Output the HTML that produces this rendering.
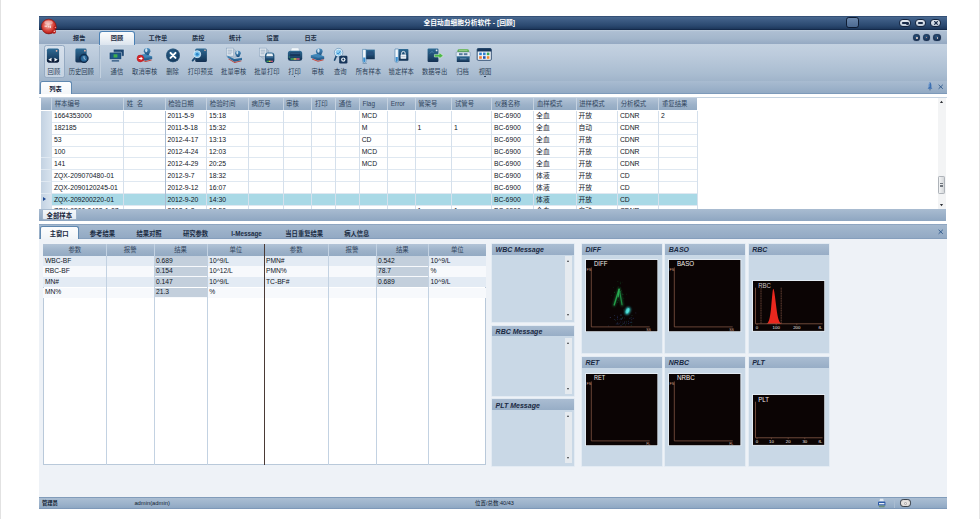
<!DOCTYPE html>
<html lang="zh"><head><meta charset="utf-8"><title>全自动血细胞分析软件</title>
<style>
*{box-sizing:border-box;margin:0;padding:0}
html,body{width:980px;height:519px;overflow:hidden;background:#fff}
body{position:relative;font-family:"Liberation Sans","Noto Sans CJK SC",sans-serif;font-size:6.5px;color:#1c2a3a;line-height:1}
.a{position:absolute}
.t{position:absolute;white-space:nowrap}
.c{position:absolute;white-space:nowrap;transform:translateX(-50%);text-align:center}
#title{left:39px;top:16px;width:908px;height:14px;background:linear-gradient(#243d62 0%,#48688f 8%,#3c5b83 30%,#2a486f 70%,#1e395d 90%,#0f2240 100%)}
#menu{left:39px;top:30px;width:908px;height:14px;background:linear-gradient(#c3d1e0 0,#adbed2 12%,#a4b7cc 60%,#94a9c2 100%)}
#ribbon{left:39px;top:43.6px;width:908px;height:37.4px;background:linear-gradient(#c4d2e1 0,#bccbdc 30%,#aabdd1 80%,#a0b4ca 100%)}
#strip1{left:39px;top:81px;width:908px;height:13.2px;background:linear-gradient(#a9bcd1 0,#93aac4 90%,#6f90b4 100%)}
.mt{top:35.1px;font-weight:bold;font-size:6.2px;color:#1d2f45}
.rl{top:68.9px;font-size:6.3px;color:#2b3e57}
</style></head>
<body>
<div class="a" style="left:0;top:0;width:1px;height:519px;background:#e2e2e2"></div><div class="a" style="left:979px;top:0;width:1px;height:519px;background:#e6e6e6"></div>
<div class="a" id="title"></div>
<div class="c" style="left:469.2px;top:20.4px;color:#fff;font-weight:bold;font-size:6.75px">全自动血细胞分析软件 - [回顾]</div>
<div class="a" id="menu"></div>
<div class="a" id="ribbon"></div>
<div class="a" id="strip1"></div>
<svg class="a" style="left:40px;top:17px" width="20" height="20" viewBox="0 0 20 20"><defs><radialGradient id="lg" cx="45%" cy="42%" r="60%"><stop offset="0" stop-color="#f6c9c2"/><stop offset="0.5" stop-color="#de5a50"/><stop offset="0.85" stop-color="#c4241d"/><stop offset="1" stop-color="#8a1410"/></radialGradient><filter id="lb" x="-30%" y="-30%" width="160%" height="160%"><feGaussianBlur stdDeviation="0.5"/></filter></defs><circle cx="8.8" cy="9.5" r="7.4" fill="url(#lg)" stroke="#7e120f" stroke-width="0.6"/><ellipse cx="8.6" cy="5.6" rx="4.2" ry="2.2" fill="#fff" opacity=".4" filter="url(#lb)"/><path d="M4.6 9.2H7M8 9.8H9.4M10.4 8.6V11" stroke="#fff" stroke-width="1" opacity=".8" filter="url(#lb)"/><circle cx="15" cy="10.6" r="1.5" fill="#b71d18"/><circle cx="15.3" cy="10.3" r="0.6" fill="#f3b9ad"/><circle cx="14" cy="14.8" r="2" fill="#b71d18"/><circle cx="14.3" cy="14.2" r="0.8" fill="#f6d2c9"/></svg>
<div class="a" style="left:99.3px;top:31px;width:36px;height:14.4px;background:linear-gradient(#fbfcfd,#eef2f6 50%,#dbe4ee);border:1px solid #4a80b4;border-bottom:none;border-radius:3.2px 3.2px 0 0"></div>
<div class="c mt" style="left:79.2px">报告</div>
<div class="c mt" style="left:116.9px">回顾</div>
<div class="c mt" style="left:157.9px">工作单</div>
<div class="c mt" style="left:198.3px">质控</div>
<div class="c mt" style="left:235.2px">统计</div>
<div class="c mt" style="left:272.7px">设置</div>
<div class="c mt" style="left:310.6px">日志</div>
<div class="a" style="left:43.6px;top:45.4px;width:21px;height:32.8px;border-radius:2.5px;background:linear-gradient(#d7e1ec,#c5d2e1);border:0.6px solid #95aac2"></div>
<div class="a" style="left:99px;top:46px;width:0.7px;height:32px;background:#a3b6cb"></div>
<div class="a" style="left:99.7px;top:46px;width:0.7px;height:32px;background:#c3d1df"></div>
<div class="c rl" style="left:53.9px">回顾</div>
<div class="c rl" style="left:81.3px">历史回顾</div>
<div class="c rl" style="left:116.9px">通信</div>
<div class="c rl" style="left:144.7px">取消审核</div>
<div class="c rl" style="left:172.6px">删除</div>
<div class="c rl" style="left:200.4px">打印预览</div>
<div class="c rl" style="left:233.7px">批量审核</div>
<div class="c rl" style="left:266.9px">批量打印</div>
<div class="c rl" style="left:294.6px">打印</div>
<div class="c rl" style="left:317.7px">审核</div>
<div class="c rl" style="left:340.3px">查询</div>
<div class="c rl" style="left:368.4px">所有样本</div>
<div class="c rl" style="left:401.2px">锁定样本</div>
<div class="c rl" style="left:434.6px">数据导出</div>
<div class="c rl" style="left:462.6px">归档</div>
<div class="c rl" style="left:485px">视图</div>
<div class="a" style="left:845.8px;top:17.4px;width:12.8px;height:11px;border-radius:2.8px;border:1.6px solid #0e1c33;background:linear-gradient(#6c88ad,#4b6990)"></div>
<div class="a" style="left:899.2px;top:19.2px;width:11.6px;height:7.6px;border-radius:3.8px;border:1.1px solid #13223b;background:linear-gradient(#e4e9f0,#bfcbd9)"></div>
<div class="a" style="left:914.6px;top:19.2px;width:11.6px;height:7.6px;border-radius:3.8px;border:1.1px solid #13223b;background:linear-gradient(#e4e9f0,#bfcbd9)"></div>
<div class="a" style="left:929.9px;top:19.2px;width:11.6px;height:7.6px;border-radius:3.8px;border:1.1px solid #13223b;background:linear-gradient(#e4e9f0,#bfcbd9)"></div>
<div class="a" style="left:901.8px;top:22.2px;width:6px;height:1.7px;background:#1a2c49;border-radius:0.8px"></div><div class="a" style="left:905.6px;top:21.5px;width:3.1px;height:3.1px;background:#1a2c49;border-radius:1.3px"></div>
<div class="a" style="left:917.8px;top:22.1px;width:5.2px;height:1.9px;background:#1a2c49;border-radius:0.9px"></div>
<svg class="a" style="left:931.7px;top:19.2px" width="8" height="8" viewBox="0 0 8 8"><path d="M2.6 2.5L5.4 5.3M5.4 2.5L2.6 5.3" stroke="#1a2c49" stroke-width="1.1" stroke-linecap="round"/></svg>
<div class="a" style="left:912.6px;top:34px;width:7.2px;height:7.2px;border-radius:50%;background:radial-gradient(circle at 45% 40%,#2f5880,#14294a 70%);box-shadow:0 0 0.8px #14294a"></div>
<div class="a" style="left:922.9px;top:34px;width:7.2px;height:7.2px;border-radius:50%;background:radial-gradient(circle at 45% 40%,#2f5880,#14294a 70%);box-shadow:0 0 0.8px #14294a"></div>
<div class="a" style="left:933.4px;top:34px;width:7.2px;height:7.2px;border-radius:50%;background:radial-gradient(circle at 45% 40%,#2f5880,#14294a 70%);box-shadow:0 0 0.8px #14294a"></div>
<div class="a" style="left:915.9px;top:37.4px;width:1.9px;height:2.1px;border-radius:50%;background:#f0d9cf"></div>
<div class="a" style="left:926.1px;top:36.6px;width:1.1px;height:1.9px;border-radius:40%;background:#c98f86"></div>
<div class="a" style="left:936.5px;top:36.6px;width:1.1px;height:2.6px;border-radius:40%;background:#e3cfc8"></div>
<div class="a" style="left:39.6px;top:80.9px;width:32.2px;height:13.6px;background:linear-gradient(#fdfdfe,#f3f6f9);border:1px solid #5f88b0;border-bottom:none;border-radius:2.5px 2.5px 0 0"></div>
<div class="c" style="left:55.4px;top:85.9px;font-weight:bold;font-size:6.2px;color:#15243a">列表</div>
<svg class="a" style="left:926px;top:81px" width="20" height="12" viewBox="0 0 20 12"><path d="M2.6 6.6Q2.4 1.4 4 1.2Q5.6 1.4 5.4 6.6L6.4 7.8H1.6Z" fill="#3b6fb2"/><path d="M3 6Q3 2.4 3.8 2" stroke="#9fc0e6" stroke-width="0.6" fill="none"/><path d="M4 7.8V9.4" stroke="#2b4a78" stroke-width="0.7"/><path d="M12.6 3.8L16.8 7.8M16.8 3.8L12.6 7.8" stroke="#2b5689" stroke-width="0.9"/></svg>
<div class="a" style="left:39px;top:94.4px;width:908px;height:116px;background:#fff"></div>
<div class="a" style="left:39px;top:97.2px;width:908px;height:0.8px;background:#c6d3e1"></div>
<div class="a" style="left:40.5px;top:98px;width:656.5px;height:12.200000000000003px;background:linear-gradient(#b3c4d7,#9db2c9 55%,#93aac3)"></div>
<div class="t" style="left:54.7px;top:101.2px;color:#33475f;font-size:6.4px">样本编号</div>
<div class="a" style="left:51.2px;top:98px;width:0.7px;height:12.200000000000003px;background:#c4d1df"></div>
<div class="t" style="left:126.8px;top:101.2px;color:#33475f;font-size:6.4px">姓&nbsp;&nbsp;名</div>
<div class="a" style="left:123.3px;top:98px;width:0.7px;height:12.200000000000003px;background:#c4d1df"></div>
<div class="t" style="left:168.2px;top:101.2px;color:#33475f;font-size:6.4px">检验日期</div>
<div class="a" style="left:164.7px;top:98px;width:0.7px;height:12.200000000000003px;background:#c4d1df"></div>
<div class="t" style="left:209.79999999999998px;top:101.2px;color:#33475f;font-size:6.4px">检验时间</div>
<div class="a" style="left:206.29999999999998px;top:98px;width:0.7px;height:12.200000000000003px;background:#c4d1df"></div>
<div class="t" style="left:251.6px;top:101.2px;color:#33475f;font-size:6.4px">病历号</div>
<div class="a" style="left:248.1px;top:98px;width:0.7px;height:12.200000000000003px;background:#c4d1df"></div>
<div class="t" style="left:286.0px;top:101.2px;color:#33475f;font-size:6.4px">审核</div>
<div class="a" style="left:282.5px;top:98px;width:0.7px;height:12.200000000000003px;background:#c4d1df"></div>
<div class="t" style="left:314.9px;top:101.2px;color:#33475f;font-size:6.4px">打印</div>
<div class="a" style="left:311.4px;top:98px;width:0.7px;height:12.200000000000003px;background:#c4d1df"></div>
<div class="t" style="left:338.8px;top:101.2px;color:#33475f;font-size:6.4px">通信</div>
<div class="a" style="left:335.3px;top:98px;width:0.7px;height:12.200000000000003px;background:#c4d1df"></div>
<div class="t" style="left:362.5px;top:101.2px;color:#33475f;font-size:6.4px">Flag</div>
<div class="a" style="left:359.0px;top:98px;width:0.7px;height:12.200000000000003px;background:#c4d1df"></div>
<div class="t" style="left:390.8px;top:101.2px;color:#33475f;font-size:6.4px">Error</div>
<div class="a" style="left:387.3px;top:98px;width:0.7px;height:12.200000000000003px;background:#c4d1df"></div>
<div class="t" style="left:418.2px;top:101.2px;color:#33475f;font-size:6.4px">管架号</div>
<div class="a" style="left:414.7px;top:98px;width:0.7px;height:12.200000000000003px;background:#c4d1df"></div>
<div class="t" style="left:454.9px;top:101.2px;color:#33475f;font-size:6.4px">试管号</div>
<div class="a" style="left:451.4px;top:98px;width:0.7px;height:12.200000000000003px;background:#c4d1df"></div>
<div class="t" style="left:494.7px;top:101.2px;color:#33475f;font-size:6.4px">仪器名称</div>
<div class="a" style="left:491.2px;top:98px;width:0.7px;height:12.200000000000003px;background:#c4d1df"></div>
<div class="t" style="left:536.9000000000001px;top:101.2px;color:#33475f;font-size:6.4px">血样模式</div>
<div class="a" style="left:533.4000000000001px;top:98px;width:0.7px;height:12.200000000000003px;background:#c4d1df"></div>
<div class="t" style="left:579.2px;top:101.2px;color:#33475f;font-size:6.4px">进样模式</div>
<div class="a" style="left:575.7px;top:98px;width:0.7px;height:12.200000000000003px;background:#c4d1df"></div>
<div class="t" style="left:620.7px;top:101.2px;color:#33475f;font-size:6.4px">分析模式</div>
<div class="a" style="left:617.2px;top:98px;width:0.7px;height:12.200000000000003px;background:#c4d1df"></div>
<div class="t" style="left:661.9000000000001px;top:101.2px;color:#33475f;font-size:6.4px">重复结果</div>
<div class="a" style="left:658.4000000000001px;top:98px;width:0.7px;height:12.200000000000003px;background:#c4d1df"></div>
<div class="a" style="left:39px;top:110.6px;width:908px;height:98.6px;overflow:hidden">
<div class="a" style="left:1.5px;top:0.0px;width:11.0px;height:11.26px;background:linear-gradient(90deg,#c3d2e2,#d9e4ef)"></div>
<div class="a" style="left:1.5px;top:11.26px;width:656.5px;height:0.7px;background:#dfe8f1"></div>
<div class="t" style="left:14.9px;top:2.9px;font-size:6.8px;color:#10161f">1664353000</div>
<div class="t" style="left:128.4px;top:2.9px;font-size:6.8px;color:#10161f">2011-5-9</div>
<div class="t" style="left:170.0px;top:2.9px;font-size:6.8px;color:#10161f">15:18</div>
<div class="t" style="left:322.7px;top:2.9px;font-size:6.8px;color:#10161f">MCD</div>
<div class="t" style="left:454.9px;top:2.9px;font-size:6.8px;color:#10161f">BC-6900</div>
<div class="t" style="left:497.1px;top:2.9px;font-size:6.8px;color:#10161f">全血</div>
<div class="t" style="left:539.4px;top:2.9px;font-size:6.8px;color:#10161f">开放</div>
<div class="t" style="left:580.9px;top:2.9px;font-size:6.8px;color:#10161f">CDNR</div>
<div class="t" style="left:622.1px;top:2.9px;font-size:6.8px;color:#10161f">2</div>
<div class="a" style="left:1.5px;top:11.86px;width:11.0px;height:11.26px;background:linear-gradient(90deg,#c3d2e2,#d9e4ef)"></div>
<div class="a" style="left:1.5px;top:23.119999999999997px;width:656.5px;height:0.7px;background:#dfe8f1"></div>
<div class="t" style="left:14.9px;top:14.76px;font-size:6.8px;color:#10161f">182185</div>
<div class="t" style="left:128.4px;top:14.76px;font-size:6.8px;color:#10161f">2011-5-18</div>
<div class="t" style="left:170.0px;top:14.76px;font-size:6.8px;color:#10161f">15:32</div>
<div class="t" style="left:322.7px;top:14.76px;font-size:6.8px;color:#10161f">M</div>
<div class="t" style="left:378.4px;top:14.76px;font-size:6.8px;color:#10161f">1</div>
<div class="t" style="left:415.09999999999997px;top:14.76px;font-size:6.8px;color:#10161f">1</div>
<div class="t" style="left:454.9px;top:14.76px;font-size:6.8px;color:#10161f">BC-6900</div>
<div class="t" style="left:497.1px;top:14.76px;font-size:6.8px;color:#10161f">全血</div>
<div class="t" style="left:539.4px;top:14.76px;font-size:6.8px;color:#10161f">自动</div>
<div class="t" style="left:580.9px;top:14.76px;font-size:6.8px;color:#10161f">CDNR</div>
<div class="a" style="left:1.5px;top:23.72px;width:11.0px;height:11.26px;background:linear-gradient(90deg,#c3d2e2,#d9e4ef)"></div>
<div class="a" style="left:1.5px;top:34.98px;width:656.5px;height:0.7px;background:#dfe8f1"></div>
<div class="t" style="left:14.9px;top:26.619999999999997px;font-size:6.8px;color:#10161f">53</div>
<div class="t" style="left:128.4px;top:26.619999999999997px;font-size:6.8px;color:#10161f">2012-4-17</div>
<div class="t" style="left:170.0px;top:26.619999999999997px;font-size:6.8px;color:#10161f">13:13</div>
<div class="t" style="left:322.7px;top:26.619999999999997px;font-size:6.8px;color:#10161f">CD</div>
<div class="t" style="left:454.9px;top:26.619999999999997px;font-size:6.8px;color:#10161f">BC-6900</div>
<div class="t" style="left:497.1px;top:26.619999999999997px;font-size:6.8px;color:#10161f">全血</div>
<div class="t" style="left:539.4px;top:26.619999999999997px;font-size:6.8px;color:#10161f">开放</div>
<div class="t" style="left:580.9px;top:26.619999999999997px;font-size:6.8px;color:#10161f">CDNR</div>
<div class="a" style="left:1.5px;top:35.58px;width:11.0px;height:11.26px;background:linear-gradient(90deg,#c3d2e2,#d9e4ef)"></div>
<div class="a" style="left:1.5px;top:46.839999999999996px;width:656.5px;height:0.7px;background:#dfe8f1"></div>
<div class="t" style="left:14.9px;top:38.48px;font-size:6.8px;color:#10161f">100</div>
<div class="t" style="left:128.4px;top:38.48px;font-size:6.8px;color:#10161f">2012-4-24</div>
<div class="t" style="left:170.0px;top:38.48px;font-size:6.8px;color:#10161f">12:03</div>
<div class="t" style="left:322.7px;top:38.48px;font-size:6.8px;color:#10161f">MCD</div>
<div class="t" style="left:454.9px;top:38.48px;font-size:6.8px;color:#10161f">BC-6900</div>
<div class="t" style="left:497.1px;top:38.48px;font-size:6.8px;color:#10161f">全血</div>
<div class="t" style="left:539.4px;top:38.48px;font-size:6.8px;color:#10161f">开放</div>
<div class="t" style="left:580.9px;top:38.48px;font-size:6.8px;color:#10161f">CDNR</div>
<div class="a" style="left:1.5px;top:47.44px;width:11.0px;height:11.26px;background:linear-gradient(90deg,#c3d2e2,#d9e4ef)"></div>
<div class="a" style="left:1.5px;top:58.699999999999996px;width:656.5px;height:0.7px;background:#dfe8f1"></div>
<div class="t" style="left:14.9px;top:50.339999999999996px;font-size:6.8px;color:#10161f">141</div>
<div class="t" style="left:128.4px;top:50.339999999999996px;font-size:6.8px;color:#10161f">2012-4-29</div>
<div class="t" style="left:170.0px;top:50.339999999999996px;font-size:6.8px;color:#10161f">20:25</div>
<div class="t" style="left:322.7px;top:50.339999999999996px;font-size:6.8px;color:#10161f">MCD</div>
<div class="t" style="left:454.9px;top:50.339999999999996px;font-size:6.8px;color:#10161f">BC-6900</div>
<div class="t" style="left:497.1px;top:50.339999999999996px;font-size:6.8px;color:#10161f">全血</div>
<div class="t" style="left:539.4px;top:50.339999999999996px;font-size:6.8px;color:#10161f">开放</div>
<div class="t" style="left:580.9px;top:50.339999999999996px;font-size:6.8px;color:#10161f">CDNR</div>
<div class="a" style="left:1.5px;top:59.3px;width:11.0px;height:11.26px;background:linear-gradient(90deg,#c3d2e2,#d9e4ef)"></div>
<div class="a" style="left:1.5px;top:70.56px;width:656.5px;height:0.7px;background:#dfe8f1"></div>
<div class="t" style="left:14.9px;top:62.199999999999996px;font-size:6.8px;color:#10161f">ZQX-209070480-01</div>
<div class="t" style="left:128.4px;top:62.199999999999996px;font-size:6.8px;color:#10161f">2012-9-7</div>
<div class="t" style="left:170.0px;top:62.199999999999996px;font-size:6.8px;color:#10161f">18:32</div>
<div class="t" style="left:454.9px;top:62.199999999999996px;font-size:6.8px;color:#10161f">BC-6900</div>
<div class="t" style="left:497.1px;top:62.199999999999996px;font-size:6.8px;color:#10161f">体液</div>
<div class="t" style="left:539.4px;top:62.199999999999996px;font-size:6.8px;color:#10161f">开放</div>
<div class="t" style="left:580.9px;top:62.199999999999996px;font-size:6.8px;color:#10161f">CD</div>
<div class="a" style="left:1.5px;top:71.16px;width:11.0px;height:11.26px;background:linear-gradient(90deg,#c3d2e2,#d9e4ef)"></div>
<div class="a" style="left:1.5px;top:82.42px;width:656.5px;height:0.7px;background:#dfe8f1"></div>
<div class="t" style="left:14.9px;top:74.06px;font-size:6.8px;color:#10161f">ZQX-2090120245-01</div>
<div class="t" style="left:128.4px;top:74.06px;font-size:6.8px;color:#10161f">2012-9-12</div>
<div class="t" style="left:170.0px;top:74.06px;font-size:6.8px;color:#10161f">16:07</div>
<div class="t" style="left:454.9px;top:74.06px;font-size:6.8px;color:#10161f">BC-6900</div>
<div class="t" style="left:497.1px;top:74.06px;font-size:6.8px;color:#10161f">体液</div>
<div class="t" style="left:539.4px;top:74.06px;font-size:6.8px;color:#10161f">开放</div>
<div class="t" style="left:580.9px;top:74.06px;font-size:6.8px;color:#10161f">CD</div>
<div class="a" style="left:12.5px;top:83.02px;width:645.5px;height:11.86px;background:#a9d9e6"></div>
<div class="a" style="left:1.5px;top:83.02px;width:11.0px;height:11.26px;background:linear-gradient(90deg,#c3d2e2,#d9e4ef)"></div>
<div class="a" style="left:1.5px;top:94.28px;width:656.5px;height:0.7px;background:#dfe8f1"></div>
<div class="t" style="left:14.9px;top:85.92px;font-size:6.8px;color:#10161f">ZQX-209200220-01</div>
<div class="t" style="left:128.4px;top:85.92px;font-size:6.8px;color:#10161f">2012-9-20</div>
<div class="t" style="left:170.0px;top:85.92px;font-size:6.8px;color:#10161f">14:30</div>
<div class="t" style="left:454.9px;top:85.92px;font-size:6.8px;color:#10161f">BC-6900</div>
<div class="t" style="left:497.1px;top:85.92px;font-size:6.8px;color:#10161f">体液</div>
<div class="t" style="left:539.4px;top:85.92px;font-size:6.8px;color:#10161f">开放</div>
<div class="t" style="left:580.9px;top:85.92px;font-size:6.8px;color:#10161f">CD</div>
<div class="a" style="left:1.5px;top:94.88px;width:11.0px;height:11.26px;background:linear-gradient(90deg,#c3d2e2,#d9e4ef)"></div>
<div class="a" style="left:1.5px;top:106.14px;width:656.5px;height:0.7px;background:#dfe8f1"></div>
<div class="t" style="left:14.9px;top:96.97999999999999px;font-size:6.8px;color:#10161f">ZQX-6900-0408-1-07</div>
<div class="t" style="left:128.4px;top:96.97999999999999px;font-size:6.8px;color:#10161f">2012-1-2</div>
<div class="t" style="left:170.0px;top:96.97999999999999px;font-size:6.8px;color:#10161f">13:50</div>
<div class="t" style="left:378.4px;top:96.97999999999999px;font-size:6.8px;color:#10161f">1</div>
<div class="t" style="left:415.09999999999997px;top:96.97999999999999px;font-size:6.8px;color:#10161f">1</div>
<div class="t" style="left:454.9px;top:96.97999999999999px;font-size:6.8px;color:#10161f">BC-6900</div>
<div class="t" style="left:497.1px;top:96.97999999999999px;font-size:6.8px;color:#10161f">全血</div>
<div class="t" style="left:539.4px;top:96.97999999999999px;font-size:6.8px;color:#10161f">自动</div>
<div class="t" style="left:580.9px;top:96.97999999999999px;font-size:6.8px;color:#10161f">CDNR</div>
<div class="a" style="left:4.2px;top:86.32px;width:0;height:0;border-left:3px solid #1f4a94;border-top:2.3px solid transparent;border-bottom:2.3px solid transparent"></div>
<div class="a" style="left:12.2px;top:0;width:0.7px;height:100px;background:#d5e0ec"></div>
<div class="a" style="left:84.3px;top:0;width:0.7px;height:100px;background:#d5e0ec"></div>
<div class="a" style="left:125.7px;top:0;width:0.9px;height:100px;background:#aabcd2"></div>
<div class="a" style="left:167.29999999999998px;top:0;width:0.7px;height:100px;background:#d5e0ec"></div>
<div class="a" style="left:209.1px;top:0;width:0.7px;height:100px;background:#d5e0ec"></div>
<div class="a" style="left:243.5px;top:0;width:0.7px;height:100px;background:#d5e0ec"></div>
<div class="a" style="left:272.4px;top:0;width:0.7px;height:100px;background:#d5e0ec"></div>
<div class="a" style="left:296.3px;top:0;width:0.7px;height:100px;background:#d5e0ec"></div>
<div class="a" style="left:320.0px;top:0;width:0.7px;height:100px;background:#d5e0ec"></div>
<div class="a" style="left:348.3px;top:0;width:0.7px;height:100px;background:#d5e0ec"></div>
<div class="a" style="left:375.7px;top:0;width:0.7px;height:100px;background:#d5e0ec"></div>
<div class="a" style="left:412.4px;top:0;width:0.7px;height:100px;background:#d5e0ec"></div>
<div class="a" style="left:452.2px;top:0;width:0.7px;height:100px;background:#d5e0ec"></div>
<div class="a" style="left:494.40000000000003px;top:0;width:0.7px;height:100px;background:#d5e0ec"></div>
<div class="a" style="left:536.7px;top:0;width:0.7px;height:100px;background:#d5e0ec"></div>
<div class="a" style="left:578.2px;top:0;width:0.7px;height:100px;background:#d5e0ec"></div>
<div class="a" style="left:619.4000000000001px;top:0;width:0.7px;height:100px;background:#d5e0ec"></div>
<div class="a" style="left:657.7px;top:0;width:0.7px;height:100px;background:#d5e0ec"></div>
</div>
<div class="a" style="left:938px;top:98px;width:7.6px;height:111px;background:#f3f4f5"></div>
<div class="a" style="left:937.6px;top:176px;width:7.6px;height:17.6px;background:linear-gradient(90deg,#f4f5f6,#d4d7da);border:0.6px solid #aeb3b9;border-radius:1.2px"></div>
<div class="a" style="left:939.7px;top:183.4px;width:3.4px;height:0.7px;background:#70767e"></div><div class="a" style="left:939.7px;top:184.8px;width:3.4px;height:0.7px;background:#70767e"></div><div class="a" style="left:939.7px;top:186.2px;width:3.4px;height:0.7px;background:#70767e"></div>
<svg class="a" style="left:938px;top:99px" width="8" height="6" viewBox="0 0 8 6"><path d="M1.9 3.9L3.5 1.7L5.1 3.9Z" fill="#2e3136"/></svg>
<svg class="a" style="left:938px;top:202px" width="8" height="6" viewBox="0 0 8 6"><path d="M1.9 2L3.5 4.2L5.1 2Z" fill="#2e3136"/></svg>
<div class="a" style="left:39px;top:209.2px;width:907.2px;height:11.4px;background:linear-gradient(#a9bcd1,#8ea6c1)"></div>
<div class="a" style="left:41.6px;top:209.8px;width:35.4px;height:10.2px;background:linear-gradient(#f4f7fa,#e3eaf2);border:0.6px solid #a3b6cc;border-top:none;border-radius:0 0 2px 2px"></div>
<div class="c" style="left:59.3px;top:212.6px;font-weight:bold;font-size:6.4px;color:#15243a">全部样本</div>
<div class="a" style="left:39px;top:220.6px;width:908px;height:3.6px;background:#fff"></div>
<div class="a" style="left:39px;top:224px;width:908px;height:14.9px;background:linear-gradient(#7f99b8 0,#a4b8ce 8%,#93aac4 90%,#7f99b8 100%)"></div>
<div class="a" style="left:39px;top:239px;width:908px;height:258px;background:#eef2f7"></div>
<div class="a" style="left:39.8px;top:226.2px;width:39.2px;height:13.2px;background:linear-gradient(#fdfdfe,#f0f4f8);border:1px solid #5f88b0;border-bottom:none;border-radius:2.5px 2.5px 0 0"></div>
<div class="c" style="left:59.2px;top:231.3px;font-weight:bold;font-size:6.3px;color:#1a2b42">主窗口</div>
<div class="c" style="left:102.4px;top:231.3px;font-weight:bold;font-size:6.3px;color:#1a2b42">参考结果</div>
<div class="c" style="left:149px;top:231.3px;font-weight:bold;font-size:6.3px;color:#1a2b42">结果对照</div>
<div class="c" style="left:195.5px;top:231.3px;font-weight:bold;font-size:6.3px;color:#1a2b42">研究参数</div>
<div class="c" style="left:246.6px;top:231.3px;font-weight:bold;font-size:6.3px;color:#1a2b42">I-Message</div>
<div class="c" style="left:304.2px;top:231.3px;font-weight:bold;font-size:6.3px;color:#1a2b42">当日重复结果</div>
<div class="c" style="left:356.8px;top:231.3px;font-weight:bold;font-size:6.3px;color:#1a2b42">病人信息</div>
<svg class="a" style="left:936px;top:227px" width="10" height="10" viewBox="0 0 10 10"><path d="M2.6 2.8L6.8 6.8M6.8 2.8L2.6 6.8" stroke="#2b5689" stroke-width="0.9"/></svg>
<div class="a" style="left:43.3px;top:243.5px;width:442.7px;height:221.89999999999998px;background:#fff;border:0.6px solid #b9c9da"></div>
<div class="a" style="left:43.3px;top:243.5px;width:442.7px;height:12.199999999999989px;background:linear-gradient(#b3c4d7,#9db2c9 55%,#93aac3)"></div>
<div class="c" style="left:74.85px;top:246.6px;color:#33475f;font-size:6.4px">参数</div>
<div class="c" style="left:130.2px;top:246.6px;color:#33475f;font-size:6.4px">报警</div>
<div class="c" style="left:180.6px;top:246.6px;color:#33475f;font-size:6.4px">结果</div>
<div class="c" style="left:235.79999999999998px;top:246.6px;color:#33475f;font-size:6.4px">单位</div>
<div class="c" style="left:296.2px;top:246.6px;color:#33475f;font-size:6.4px">参数</div>
<div class="c" style="left:352.0px;top:246.6px;color:#33475f;font-size:6.4px">报警</div>
<div class="c" style="left:402.3px;top:246.6px;color:#33475f;font-size:6.4px">结果</div>
<div class="c" style="left:457.3px;top:246.6px;color:#33475f;font-size:6.4px">单位</div>
<div class="a" style="left:43.3px;top:255.7px;width:442.7px;height:10.6px;background:#e3ebf4"></div>
<div class="a" style="left:154.4px;top:256.0px;width:52.59999999999999px;height:9.7px;background:#c3cfdc"></div>
<div class="t" style="left:44.9px;top:257.59999999999997px;font-size:6.7px;color:#10161f">WBC-BF</div>
<div class="t" style="left:156px;top:257.59999999999997px;font-size:6.7px;color:#10161f">0.689</div>
<div class="t" style="left:209.2px;top:257.59999999999997px;font-size:6.7px;color:#10161f">10^9/L</div>
<div class="a" style="left:376.4px;top:256.0px;width:52.00000000000002px;height:9.7px;background:#c3cfdc"></div>
<div class="t" style="left:266.0px;top:257.59999999999997px;font-size:6.7px;color:#10161f">PMN#</div>
<div class="t" style="left:378px;top:257.59999999999997px;font-size:6.7px;color:#10161f">0.542</div>
<div class="t" style="left:430.6px;top:257.59999999999997px;font-size:6.7px;color:#10161f">10^9/L</div>
<div class="a" style="left:43.3px;top:266.3px;width:442.7px;height:10.6px;background:#f7f9fc"></div>
<div class="a" style="left:154.4px;top:266.6px;width:52.59999999999999px;height:9.7px;background:#c3cfdc"></div>
<div class="t" style="left:44.9px;top:268.2px;font-size:6.7px;color:#10161f">RBC-BF</div>
<div class="t" style="left:156px;top:268.2px;font-size:6.7px;color:#10161f">0.154</div>
<div class="t" style="left:209.2px;top:268.2px;font-size:6.7px;color:#10161f">10^12/L</div>
<div class="a" style="left:376.4px;top:266.6px;width:52.00000000000002px;height:9.7px;background:#c3cfdc"></div>
<div class="t" style="left:266.0px;top:268.2px;font-size:6.7px;color:#10161f">PMN%</div>
<div class="t" style="left:378px;top:268.2px;font-size:6.7px;color:#10161f">78.7</div>
<div class="t" style="left:430.6px;top:268.2px;font-size:6.7px;color:#10161f">%</div>
<div class="a" style="left:43.3px;top:276.9px;width:442.7px;height:10.6px;background:#e3ebf4"></div>
<div class="a" style="left:154.4px;top:277.2px;width:52.59999999999999px;height:9.7px;background:#c3cfdc"></div>
<div class="t" style="left:44.9px;top:278.79999999999995px;font-size:6.7px;color:#10161f">MN#</div>
<div class="t" style="left:156px;top:278.79999999999995px;font-size:6.7px;color:#10161f">0.147</div>
<div class="t" style="left:209.2px;top:278.79999999999995px;font-size:6.7px;color:#10161f">10^9/L</div>
<div class="a" style="left:376.4px;top:277.2px;width:52.00000000000002px;height:9.7px;background:#c3cfdc"></div>
<div class="t" style="left:266.0px;top:278.79999999999995px;font-size:6.7px;color:#10161f">TC-BF#</div>
<div class="t" style="left:378px;top:278.79999999999995px;font-size:6.7px;color:#10161f">0.689</div>
<div class="t" style="left:430.6px;top:278.79999999999995px;font-size:6.7px;color:#10161f">10^9/L</div>
<div class="a" style="left:43.3px;top:287.5px;width:442.7px;height:10.6px;background:#f7f9fc"></div>
<div class="a" style="left:154.4px;top:287.8px;width:52.59999999999999px;height:9.7px;background:#c3cfdc"></div>
<div class="t" style="left:44.9px;top:289.4px;font-size:6.7px;color:#10161f">MN%</div>
<div class="t" style="left:156px;top:289.4px;font-size:6.7px;color:#10161f">21.3</div>
<div class="t" style="left:209.2px;top:289.4px;font-size:6.7px;color:#10161f">%</div>
<div class="a" style="left:106.10000000000001px;top:243.5px;width:0.7px;height:221.89999999999998px;background:#c3d2e2"></div>
<div class="a" style="left:153.7px;top:243.5px;width:0.7px;height:221.89999999999998px;background:#c3d2e2"></div>
<div class="a" style="left:206.89999999999998px;top:243.5px;width:0.7px;height:221.89999999999998px;background:#c3d2e2"></div>
<div class="a" style="left:264.0px;top:243.5px;width:0.9px;height:221.89999999999998px;background:#4a3a36"></div>
<div class="a" style="left:327.7px;top:243.5px;width:0.7px;height:221.89999999999998px;background:#c3d2e2"></div>
<div class="a" style="left:375.7px;top:243.5px;width:0.7px;height:221.89999999999998px;background:#c3d2e2"></div>
<div class="a" style="left:428.3px;top:243.5px;width:0.7px;height:221.89999999999998px;background:#c3d2e2"></div>
<div class="a" style="left:492px;top:244px;width:82px;height:78.4px;background:#c9d8e6;box-shadow:0 0 0 0.7px #dfe8f1"></div>
<div class="a" style="left:492px;top:244px;width:82px;height:10.6px;background:linear-gradient(#aabdd2,#97adc6)"></div>
<div class="t" style="left:495.6px;top:246.2px;font-weight:bold;font-style:italic;font-size:7px;color:#1a2942">WBC Message</div>
<div class="a" style="left:565px;top:256.4px;width:7.2px;height:63.800000000000004px;background:#e5eaef"></div>
<div class="a" style="left:567px;top:260px;border-left:1.6px solid transparent;border-right:1.6px solid transparent;border-bottom:2px solid #3c4046"></div>
<div class="a" style="left:567px;top:314.0px;border-left:1.6px solid transparent;border-right:1.6px solid transparent;border-top:2px solid #3c4046"></div>
<div class="a" style="left:492px;top:325.8px;width:82px;height:70.6px;background:#c9d8e6;box-shadow:0 0 0 0.7px #dfe8f1"></div>
<div class="a" style="left:492px;top:325.8px;width:82px;height:10.6px;background:linear-gradient(#aabdd2,#97adc6)"></div>
<div class="t" style="left:495.6px;top:328.0px;font-weight:bold;font-style:italic;font-size:7px;color:#1a2942">RBC Message</div>
<div class="a" style="left:565px;top:338.2px;width:7.2px;height:55.99999999999999px;background:#e5eaef"></div>
<div class="a" style="left:567px;top:341.8px;border-left:1.6px solid transparent;border-right:1.6px solid transparent;border-bottom:2px solid #3c4046"></div>
<div class="a" style="left:567px;top:388.0px;border-left:1.6px solid transparent;border-right:1.6px solid transparent;border-top:2px solid #3c4046"></div>
<div class="a" style="left:492px;top:399.3px;width:82px;height:66.4px;background:#c9d8e6;box-shadow:0 0 0 0.7px #dfe8f1"></div>
<div class="a" style="left:492px;top:399.3px;width:82px;height:10.6px;background:linear-gradient(#aabdd2,#97adc6)"></div>
<div class="t" style="left:495.6px;top:401.5px;font-weight:bold;font-style:italic;font-size:7px;color:#1a2942">PLT Message</div>
<div class="a" style="left:565px;top:411.7px;width:7.2px;height:51.800000000000004px;background:#e5eaef"></div>
<div class="a" style="left:567px;top:415.3px;border-left:1.6px solid transparent;border-right:1.6px solid transparent;border-bottom:2px solid #3c4046"></div>
<div class="a" style="left:567px;top:457.30000000000007px;border-left:1.6px solid transparent;border-right:1.6px solid transparent;border-top:2px solid #3c4046"></div>
<div class="a" style="left:581.8px;top:243.6px;width:80px;height:109.6px;background:#c9d8e6;box-shadow:0 0 0 0.7px #dfe8f1"></div>
<div class="a" style="left:581.8px;top:243.6px;width:80px;height:11px;background:linear-gradient(#aabdd2,#97adc6)"></div>
<div class="t" style="left:585.4px;top:245.79999999999998px;font-weight:bold;font-style:italic;font-size:7px;color:#1a2942">DIFF</div>
<div class="a" style="left:665.2px;top:243.6px;width:80px;height:109.6px;background:#c9d8e6;box-shadow:0 0 0 0.7px #dfe8f1"></div>
<div class="a" style="left:665.2px;top:243.6px;width:80px;height:11px;background:linear-gradient(#aabdd2,#97adc6)"></div>
<div class="t" style="left:668.8000000000001px;top:245.79999999999998px;font-weight:bold;font-style:italic;font-size:7px;color:#1a2942">BASO</div>
<div class="a" style="left:748.6px;top:243.6px;width:80px;height:109.6px;background:#c9d8e6;box-shadow:0 0 0 0.7px #dfe8f1"></div>
<div class="a" style="left:748.6px;top:243.6px;width:80px;height:11px;background:linear-gradient(#aabdd2,#97adc6)"></div>
<div class="t" style="left:752.2px;top:245.79999999999998px;font-weight:bold;font-style:italic;font-size:7px;color:#1a2942">RBC</div>
<div class="a" style="left:581.8px;top:357.2px;width:80px;height:108.6px;background:#c9d8e6;box-shadow:0 0 0 0.7px #dfe8f1"></div>
<div class="a" style="left:581.8px;top:357.2px;width:80px;height:11px;background:linear-gradient(#aabdd2,#97adc6)"></div>
<div class="t" style="left:585.4px;top:359.4px;font-weight:bold;font-style:italic;font-size:7px;color:#1a2942">RET</div>
<div class="a" style="left:665.2px;top:357.2px;width:80px;height:108.6px;background:#c9d8e6;box-shadow:0 0 0 0.7px #dfe8f1"></div>
<div class="a" style="left:665.2px;top:357.2px;width:80px;height:11px;background:linear-gradient(#aabdd2,#97adc6)"></div>
<div class="t" style="left:668.8000000000001px;top:359.4px;font-weight:bold;font-style:italic;font-size:7px;color:#1a2942">NRBC</div>
<div class="a" style="left:748.6px;top:357.2px;width:80px;height:108.6px;background:#c9d8e6;box-shadow:0 0 0 0.7px #dfe8f1"></div>
<div class="a" style="left:748.6px;top:357.2px;width:80px;height:11px;background:linear-gradient(#aabdd2,#97adc6)"></div>
<div class="t" style="left:752.2px;top:359.4px;font-weight:bold;font-style:italic;font-size:7px;color:#1a2942">PLT</div>
<svg class="a" style="left:585px;top:258.9px" width="73.4" height="73.3" viewBox="-1 -1 73.4 73.3"><rect x="-0.5" y="-0.5" width="72.4" height="72.3" fill="#0b0404" stroke="#e3ebf3" stroke-width="1"/><defs><filter id="b1" x="-50%" y="-50%" width="200%" height="200%"><feGaussianBlur stdDeviation="0.7"/></filter><filter id="b2" x="-50%" y="-50%" width="200%" height="200%"><feGaussianBlur stdDeviation="1.1"/></filter></defs><g filter="url(#b2)" opacity=".55"><path d="M33.1 29L28 45.4M33.6 31L36.2 45.2" stroke="#1c8a40" stroke-width="2.6" stroke-linecap="round"/></g><g filter="url(#b1)"><path d="M33.1 29L28.2 45" stroke="#22a049" stroke-width="1.3" stroke-linecap="round"/><path d="M33.7 31.5L36 44.6" stroke="#1e8f43" stroke-width="1.1" stroke-linecap="round"/><path d="M33.2 29.5L32.2 37" stroke="#35c765" stroke-width="0.8" stroke-linecap="round"/></g><g filter="url(#b2)"><ellipse cx="41.7" cy="50.9" rx="2.5" ry="3.9" fill="#2fc4c0" transform="rotate(22 41.7 50.9)"/></g><ellipse cx="41.7" cy="50.7" rx="1.5" ry="2.7" fill="#55e3de" filter="url(#b1)" transform="rotate(22 41.7 50.7)"/><circle cx="36.2" cy="62.0" r="0.45" fill="#3a5fc0" opacity="0.38"/><circle cx="31.5" cy="59.1" r="0.45" fill="#3a5fc0" opacity="0.76"/><circle cx="38.7" cy="61.7" r="0.45" fill="#6a7fd0" opacity="0.38"/><circle cx="44.2" cy="62.3" r="0.45" fill="#3a5fc0" opacity="0.78"/><circle cx="31.7" cy="56.1" r="0.45" fill="#3a5fc0" opacity="0.61"/><circle cx="22.7" cy="65.9" r="0.45" fill="#3b78b8" opacity="0.48"/><circle cx="40.2" cy="61.6" r="0.45" fill="#2c8f6a" opacity="0.60"/><circle cx="36.6" cy="58.3" r="0.45" fill="#3b78b8" opacity="0.52"/><circle cx="35.6" cy="59.6" r="0.45" fill="#3a5fc0" opacity="0.63"/><circle cx="29.4" cy="60.1" r="0.45" fill="#2c8f6a" opacity="0.56"/><circle cx="43.9" cy="58.2" r="0.45" fill="#3b78b8" opacity="0.71"/><circle cx="36.4" cy="57.2" r="0.45" fill="#2c8f6a" opacity="0.59"/><circle cx="46.0" cy="55.4" r="0.45" fill="#2c8f6a" opacity="0.62"/><circle cx="45.5" cy="62.1" r="0.45" fill="#3b78b8" opacity="0.69"/><circle cx="42.7" cy="63.8" r="0.45" fill="#3a5fc0" opacity="0.78"/><circle cx="45.9" cy="62.4" r="0.45" fill="#2c8f6a" opacity="0.50"/><circle cx="33.2" cy="63.8" r="0.45" fill="#6a7fd0" opacity="0.38"/><circle cx="42.6" cy="61.8" r="0.45" fill="#3a5fc0" opacity="0.38"/><circle cx="35.0" cy="54.5" r="0.45" fill="#6a7fd0" opacity="0.48"/><circle cx="30.2" cy="63.9" r="0.45" fill="#3a5fc0" opacity="0.77"/><circle cx="32.1" cy="64.3" r="0.45" fill="#6a7fd0" opacity="0.38"/><circle cx="38.4" cy="57.9" r="0.45" fill="#3b78b8" opacity="0.53"/><circle cx="45.1" cy="57.7" r="0.45" fill="#3b78b8" opacity="0.55"/><circle cx="24.2" cy="57.5" r="0.45" fill="#6a7fd0" opacity="0.74"/><circle cx="36.7" cy="64.1" r="0.45" fill="#2c8f6a" opacity="0.66"/><circle cx="34.3" cy="62.0" r="0.45" fill="#3a5fc0" opacity="0.43"/><circle cx="38.6" cy="62.9" r="0.45" fill="#6a7fd0" opacity="0.72"/><circle cx="40.3" cy="63.0" r="0.45" fill="#3b78b8" opacity="0.54"/><circle cx="31.8" cy="63.8" r="0.45" fill="#3b78b8" opacity="0.66"/><circle cx="28.3" cy="59.5" r="0.45" fill="#3a5fc0" opacity="0.56"/><circle cx="49.9" cy="52.9" r="0.45" fill="#6a7fd0" opacity="0.53"/><circle cx="31.7" cy="62.8" r="0.45" fill="#6a7fd0" opacity="0.38"/><circle cx="42.4" cy="61.1" r="0.45" fill="#3b78b8" opacity="0.40"/><circle cx="35.4" cy="58.9" r="0.45" fill="#3b78b8" opacity="0.59"/><circle cx="47.2" cy="58.3" r="0.45" fill="#3a5fc0" opacity="0.74"/><circle cx="35.0" cy="58.5" r="0.45" fill="#2c8f6a" opacity="0.78"/><circle cx="31.6" cy="57.3" r="0.45" fill="#3a5fc0" opacity="0.73"/><circle cx="45.8" cy="59.8" r="0.45" fill="#6a7fd0" opacity="0.49"/><circle cx="45.2" cy="65.2" r="0.45" fill="#2c8f6a" opacity="0.57"/><circle cx="35.0" cy="55.5" r="0.45" fill="#3b78b8" opacity="0.78"/><circle cx="34.1" cy="59.6" r="0.45" fill="#3a5fc0" opacity="0.69"/><circle cx="35.0" cy="65.5" r="0.45" fill="#3a5fc0" opacity="0.66"/><circle cx="37.5" cy="63.8" r="0.45" fill="#3b78b8" opacity="0.51"/><circle cx="39.5" cy="64.9" r="0.45" fill="#2c8f6a" opacity="0.64"/><circle cx="28.7" cy="55.4" r="0.45" fill="#3b78b8" opacity="0.71"/><circle cx="42.8" cy="54.0" r="0.45" fill="#3b78b8" opacity="0.44"/><circle cx="28.5" cy="32.7" r="0.4" fill="#1f9a4a" opacity="0.70"/><circle cx="36.1" cy="22.1" r="0.4" fill="#1f9a4a" opacity="0.38"/><circle cx="32.1" cy="26.9" r="0.4" fill="#1f9a4a" opacity="0.62"/><circle cx="34.4" cy="23.8" r="0.4" fill="#1f9a4a" opacity="0.69"/><circle cx="36.6" cy="34.0" r="0.4" fill="#1f9a4a" opacity="0.49"/><circle cx="32.6" cy="40.8" r="0.4" fill="#1f9a4a" opacity="0.69"/><circle cx="34.8" cy="31.6" r="0.4" fill="#1f9a4a" opacity="0.66"/><circle cx="31.8" cy="42.7" r="0.4" fill="#1f9a4a" opacity="0.63"/><circle cx="37.9" cy="38.1" r="0.4" fill="#1f9a4a" opacity="0.58"/><circle cx="37.6" cy="49.9" r="0.4" fill="#1f9a4a" opacity="0.47"/><circle cx="33.9" cy="29.1" r="0.4" fill="#1f9a4a" opacity="0.68"/><circle cx="34.2" cy="22.1" r="0.4" fill="#1f9a4a" opacity="0.60"/><circle cx="37.0" cy="34.7" r="0.4" fill="#1f9a4a" opacity="0.70"/><circle cx="40.3" cy="34.1" r="0.4" fill="#1f9a4a" opacity="0.49"/><circle cx="31.9" cy="21.7" r="0.4" fill="#1f9a4a" opacity="0.54"/><circle cx="25.7" cy="35.4" r="0.4" fill="#1f9a4a" opacity="0.36"/><circle cx="34.2" cy="31.4" r="0.4" fill="#1f9a4a" opacity="0.62"/><circle cx="34.7" cy="27.9" r="0.4" fill="#1f9a4a" opacity="0.60"/><circle cx="42.5" cy="52.3" r="0.4" fill="#1f9a4a" opacity="0.38"/><circle cx="35.7" cy="30.5" r="0.4" fill="#1f9a4a" opacity="0.39"/><circle cx="28.2" cy="31.9" r="0.4" fill="#1f9a4a" opacity="0.43"/><circle cx="27.7" cy="27.3" r="0.4" fill="#1f9a4a" opacity="0.32"/><path d="M5.3 7.4V66.9H63.7" fill="none" stroke="#9a6752" stroke-width="0.65"/><text x="8" y="6.1" font-size="7.2" textLength="13.3" lengthAdjust="spacingAndGlyphs" fill="#f3ece8" font-family='"Liberation Sans","Noto Sans CJK SC",sans-serif'>DIFF</text><text x="0.6" y="10.6" font-size="3.6" fill="#d9a792" font-family='"Liberation Sans","Noto Sans CJK SC",sans-serif'>FS</text><text x="60.2" y="70.6" font-size="3.6" fill="#d9a792" font-family='"Liberation Sans","Noto Sans CJK SC",sans-serif'>SS</text></svg>
<svg class="a" style="left:668.4px;top:258.9px" width="73.4" height="73.3" viewBox="-1 -1 73.4 73.3"><rect x="-0.5" y="-0.5" width="72.4" height="72.3" fill="#0b0404" stroke="#e3ebf3" stroke-width="1"/><path d="M5.3 7.4V66.9H63.7" fill="none" stroke="#9a6752" stroke-width="0.65"/><text x="8" y="6.1" font-size="7.2" textLength="17.2" lengthAdjust="spacingAndGlyphs" fill="#f3ece8" font-family='"Liberation Sans","Noto Sans CJK SC",sans-serif'>BASO</text><text x="0.6" y="10.6" font-size="3.6" fill="#d9a792" font-family='"Liberation Sans","Noto Sans CJK SC",sans-serif'>FS</text><text x="60.2" y="70.6" font-size="3.6" fill="#d9a792" font-family='"Liberation Sans","Noto Sans CJK SC",sans-serif'>SS</text></svg>
<svg class="a" style="left:585px;top:372.6px" width="73.4" height="73.3" viewBox="-1 -1 73.4 73.3"><rect x="-0.5" y="-0.5" width="72.4" height="72.3" fill="#0b0404" stroke="#e3ebf3" stroke-width="1"/><path d="M5.3 7.4V66.9H63.7" fill="none" stroke="#9a6752" stroke-width="0.65"/><text x="8" y="6.1" font-size="7.2" textLength="11.1" lengthAdjust="spacingAndGlyphs" fill="#f3ece8" font-family='"Liberation Sans","Noto Sans CJK SC",sans-serif'>RET</text><text x="0.6" y="10.6" font-size="3.6" fill="#d9a792" font-family='"Liberation Sans","Noto Sans CJK SC",sans-serif'>FS</text><text x="60.2" y="70.6" font-size="3.6" fill="#d9a792" font-family='"Liberation Sans","Noto Sans CJK SC",sans-serif'>FL</text></svg>
<svg class="a" style="left:668.4px;top:372.6px" width="73.4" height="73.3" viewBox="-1 -1 73.4 73.3"><rect x="-0.5" y="-0.5" width="72.4" height="72.3" fill="#0b0404" stroke="#e3ebf3" stroke-width="1"/><path d="M5.3 7.4V66.9H63.7" fill="none" stroke="#9a6752" stroke-width="0.65"/><text x="8" y="6.1" font-size="7.2" textLength="17.7" lengthAdjust="spacingAndGlyphs" fill="#f3ece8" font-family='"Liberation Sans","Noto Sans CJK SC",sans-serif'>NRBC</text><text x="0.6" y="10.6" font-size="3.6" fill="#d9a792" font-family='"Liberation Sans","Noto Sans CJK SC",sans-serif'>FS</text><text x="60.2" y="70.6" font-size="3.6" fill="#d9a792" font-family='"Liberation Sans","Noto Sans CJK SC",sans-serif'>FL</text></svg>
<svg class="a" style="left:752px;top:280.1px" width="73.3" height="51.9" viewBox="-1 -1 73.3 51.9"><rect x="-0.5" y="-0.5" width="72.3" height="50.9" fill="#0b0404" stroke="#e3ebf3" stroke-width="1"/><path d="M8 6.7V42.8M28.2 6.7V42.8" stroke="#a46d58" stroke-width="0.6" stroke-dasharray="1.2 0.5"/><path d="M13.2 42.8C15.8 42.5 16.8 38 18 28C19 18 19.6 8 20.3 7.8C21.2 8 22.2 17 23.4 27C24.8 38 26.2 42.3 29.2 42.8Z" fill="#ea271e"/><path d="M2.5 6.7V42.8H69.6" fill="none" stroke="#9a6752" stroke-width="0.7"/><text x="4" y="48.4" font-size="4.3" fill="#f0ebe8" text-anchor="middle" font-family='"Liberation Sans","Noto Sans CJK SC",sans-serif'>0</text><path d="M4 42.8v1.4" stroke="#9a6752" stroke-width="0.5"/><text x="23.2" y="48.4" font-size="4.3" fill="#f0ebe8" text-anchor="middle" font-family='"Liberation Sans","Noto Sans CJK SC",sans-serif'>100</text><path d="M23.2 42.8v1.4" stroke="#9a6752" stroke-width="0.5"/><text x="43.8" y="48.4" font-size="4.3" fill="#f0ebe8" text-anchor="middle" font-family='"Liberation Sans","Noto Sans CJK SC",sans-serif'>200</text><path d="M43.8 42.8v1.4" stroke="#9a6752" stroke-width="0.5"/><text x="67.4" y="48.4" font-size="4.3" fill="#f0ebe8" text-anchor="middle" font-family='"Liberation Sans","Noto Sans CJK SC",sans-serif'>fL</text><text x="5.2" y="7.5" font-size="7.2" textLength="12.8" lengthAdjust="spacingAndGlyphs" fill="#c9c3c6" font-family='"Liberation Sans","Noto Sans CJK SC",sans-serif'>RBC</text></svg>
<svg class="a" style="left:752px;top:394.2px" width="73.3" height="51.9" viewBox="-1 -1 73.3 51.9"><rect x="-0.5" y="-0.5" width="72.3" height="50.9" fill="#0b0404" stroke="#e3ebf3" stroke-width="1"/><path d="M2.5 6.7V42.8H69.6" fill="none" stroke="#9a6752" stroke-width="0.7"/><text x="4" y="48.4" font-size="4.3" fill="#f0ebe8" text-anchor="middle" font-family='"Liberation Sans","Noto Sans CJK SC",sans-serif'>0</text><path d="M4 42.8v1.4" stroke="#9a6752" stroke-width="0.5"/><text x="18.4" y="48.4" font-size="4.3" fill="#f0ebe8" text-anchor="middle" font-family='"Liberation Sans","Noto Sans CJK SC",sans-serif'>10</text><path d="M18.4 42.8v1.4" stroke="#9a6752" stroke-width="0.5"/><text x="35.2" y="48.4" font-size="4.3" fill="#f0ebe8" text-anchor="middle" font-family='"Liberation Sans","Noto Sans CJK SC",sans-serif'>20</text><path d="M35.2 42.8v1.4" stroke="#9a6752" stroke-width="0.5"/><text x="51.8" y="48.4" font-size="4.3" fill="#f0ebe8" text-anchor="middle" font-family='"Liberation Sans","Noto Sans CJK SC",sans-serif'>30</text><path d="M51.8 42.8v1.4" stroke="#9a6752" stroke-width="0.5"/><text x="67.4" y="48.4" font-size="4.3" fill="#f0ebe8" text-anchor="middle" font-family='"Liberation Sans","Noto Sans CJK SC",sans-serif'>fL</text><text x="5.2" y="7.5" font-size="7.2" textLength="10.7" lengthAdjust="spacingAndGlyphs" fill="#f3ece8" font-family='"Liberation Sans","Noto Sans CJK SC",sans-serif'>PLT</text></svg>
<div class="a" style="left:39px;top:497px;width:908px;height:12.4px;background:linear-gradient(#6c8aad 0,#a9bdd2 12%,#9db3cb 55%,#90a9c4 88%,#7590b2 100%)"></div>
<div class="t" style="left:42px;top:501.3px;font-size:5.3px;font-weight:bold;color:#101c30">管理员</div>
<div class="t" style="left:134.4px;top:501.4px;font-size:5.8px;color:#101c30">admin(admin)</div>
<div class="t" style="left:475px;top:501.3px;font-size:5.5px;color:#101c30">位置/总数:40/43</div>
<svg class="a" style="left:877px;top:498.4px" width="10" height="10" viewBox="0 0 10 10"><path d="M3 0.8h3.2l0.8 3H2.2z" fill="#dfe8f0"/><path d="M1 4.4Q1 3.4 2.2 3.4h5Q8.4 3.4 8.4 4.4V7.6H1z" fill="#2b59a8"/><rect x="2" y="5" width="5.4" height="1.3" fill="#e7eef6"/><path d="M1.6 7.4h6.4l-0.6 1.8H2.2z" fill="#6d8f7a"/></svg>
<div class="a" style="left:894px;top:499.6px;width:0.7px;height:8px;background:#a9bcd1"></div>
<div class="a" style="left:900.2px;top:498.9px;width:10.6px;height:8.6px;border-radius:3.2px;background:radial-gradient(#f1eeec,#d6d2d0);border:1.1px solid #3c424a"></div>
<div class="a" style="left:903.6px;top:501.6px;width:3.4px;height:3px;border:0.5px solid #b5b3b3;border-radius:1px"></div>
<svg width="0" height="0" style="position:absolute"><defs><linearGradient id="bk" x1="0" y1="0" x2="0" y2="1"><stop offset="0" stop-color="#2f6b95"/><stop offset="1" stop-color="#123052"/></linearGradient><linearGradient id="st" x1="0" y1="0" x2="0" y2="1"><stop offset="0" stop-color="#4a8fc0"/><stop offset="1" stop-color="#1d4f7e"/></linearGradient><radialGradient id="dl" cx="45%" cy="40%" r="65%"><stop offset="0" stop-color="#2f6b98"/><stop offset="1" stop-color="#0f2d4d"/></radialGradient><filter id="ib" x="-20%" y="-20%" width="140%" height="140%"><feGaussianBlur stdDeviation="0.25"/></filter></defs></svg>
<svg class="a" style="left:44px;top:47px" width="18" height="18" viewBox="0 0 18 18"><g filter="url(#ib)"><rect x="2.9" y="1.6" width="12.2" height="13.8" rx="1.6" fill="url(#bk)"/><path d="M2.9 12.6Q2.9 15.4 5 15.4H13Q15.1 15.4 15.1 12.6" fill="#0a1e38"/><circle cx="12.6" cy="3.8" r="0.9" fill="#f0b7a8"/><path d="M7.6 10.8L4.2 12.7L7.6 14.6ZM10.4 10.8L13.8 12.7L10.4 14.6Z" fill="#f4f7fa"/><circle cx="9" cy="12.8" r="1.3" fill="#0c2140"/></g></svg>
<svg class="a" style="left:73px;top:47px" width="18" height="18" viewBox="0 0 18 18"><g filter="url(#ib)"><rect x="2.4" y="1.6" width="11.2" height="13.8" rx="1.4" fill="url(#bk)"/><circle cx="11.9" cy="3.7" r="0.9" fill="#f0b7a8"/><circle cx="11" cy="11.4" r="4.2" fill="#17406a" stroke="#0d2745" stroke-width="0.9"/><circle cx="11" cy="11.4" r="2.9" fill="#2d6c9c"/><path d="M11 9.2V11.5L12.5 12.5" stroke="#dbe8f3" stroke-width="0.7" fill="none"/></g></svg>
<svg class="a" style="left:108px;top:47px" width="18" height="18" viewBox="0 0 18 18"><g filter="url(#ib)"><rect x="5.4" y="2.3" width="10.6" height="7" rx="0.8" fill="#1a4470" stroke="#e8eff6" stroke-width="0.4"/><rect x="1.3" y="5.2" width="12.3" height="7.4" rx="0.8" fill="#1d4d7c" stroke="#dfe8f1" stroke-width="0.5"/><rect x="3" y="6.6" width="8.9" height="4.6" fill="#1c5a88"/><rect x="5.6" y="7.3" width="3.8" height="3.2" fill="#3fae4c"/><rect x="3.6" y="13.3" width="7.6" height="1.3" rx="0.5" fill="#23507e"/></g></svg>
<svg class="a" style="left:136px;top:47px" width="18" height="18" viewBox="0 0 18 18"><g filter="url(#ib)"><path d="M7.8 4.3Q7.8 1.0 11.1 1.0Q14.399999999999999 1.0 14.399999999999999 4.3L12.584999999999999 8.425H9.615Z" fill="url(#st)"/><ellipse cx="10.275" cy="3.31" rx="1.1549999999999998" ry="1.9799999999999998" fill="#eaf3fa" opacity=".85"/><path d="M2.2 8.6L8.8 7.2L16.2 9.4V12L9.6 13.8L2.2 11Z" fill="url(#st)"/><path d="M2.2 8.6L8.8 7.2L16.2 9.4L9.6 10.8Z" fill="#3f86b8"/><path d="M3 11.5L9.6 14L15.6 12.4V13.4L9.6 15L3 12.5Z" fill="#c8463c"/><circle cx="4.4" cy="11.5" r="3.4" fill="#d6262b" stroke="#a5161a" stroke-width="0.4"/><path d="M2.8 11.5H6M4.6 10L6.1 11.5L4.6 13" stroke="#fff" stroke-width="1" fill="none"/></g></svg>
<svg class="a" style="left:164px;top:47px" width="18" height="18" viewBox="0 0 18 18"><g filter="url(#ib)"><circle cx="9" cy="8.4" r="6.9" fill="url(#dl)"/><circle cx="9" cy="8.4" r="6.5" fill="none" stroke="#4f86b0" stroke-width="0.5" opacity=".7"/><path d="M6.5 5.9L11.5 10.9M11.5 5.9L6.5 10.9" stroke="#fff" stroke-width="2" stroke-linecap="round"/></g></svg>
<svg class="a" style="left:191px;top:47px" width="18" height="18" viewBox="0 0 18 18"><g filter="url(#ib)"><rect x="4.2" y="1.6" width="11.7" height="13.3" rx="1.5" fill="url(#bk)"/><circle cx="14" cy="3.3" r="0.8" fill="#f0b7a8"/><path d="M4.4 10.4L1.6 13.6" stroke="#1b4872" stroke-width="1.8" stroke-linecap="round"/><circle cx="6.2" cy="7.2" r="3.5" fill="#7cc4ee" stroke="#e6f1fa" stroke-width="0.8"/><circle cx="6.2" cy="7.2" r="1.5" fill="#2d86c8"/></g></svg>
<svg class="a" style="left:225px;top:47px" width="18" height="18" viewBox="0 0 18 18"><g filter="url(#ib)"><path d="M2.4 2.2H9L10.6 3.6V10.2H4Z" fill="#b9c7d7" stroke="#7f99b6" stroke-width="0.4"/><rect x="1.3" y="1.1" width="7.4" height="8" fill="#e3eaf1" stroke="#7f99b6" stroke-width="0.5"/><path d="M2.6 3.2H7.4M2.6 5H7.4M2.6 6.8H6.4" stroke="#6f8cab" stroke-width="0.6"/><path d="M10.2 6.6Q10.2 3.8 13 3.8Q15.8 3.8 15.8 6.6L14.26 10.1H11.74Z" fill="url(#st)"/><ellipse cx="12.3" cy="5.76" rx="0.9799999999999999" ry="1.68" fill="#eaf3fa" opacity=".85"/><path d="M2.4 8.6L9.4 12L17 10.8V13L9.6 14.8L2.4 10.6Z" fill="url(#st)"/><path d="M3.4 11.4L9.6 15L16.4 13.4V14.2L9.6 15.9L3.4 12.2Z" fill="#b8403a"/></g></svg>
<svg class="a" style="left:258px;top:47px" width="18" height="18" viewBox="0 0 18 18"><g filter="url(#ib)"><path d="M2.4 2.2H9L10.6 3.6V10.2L6.6 13L2.4 9.4Z" fill="#aebdce" stroke="#7f99b6" stroke-width="0.4"/><rect x="1.3" y="1.1" width="7.4" height="8" fill="#e3eaf1" stroke="#7f99b6" stroke-width="0.5"/><path d="M2.6 3.2H7.4M2.6 5H7.4M2.6 6.8H6.4" stroke="#6f8cab" stroke-width="0.6"/><rect x="7" y="5.4" width="9.4" height="10.6" rx="3" fill="url(#bk)"/><path d="M9 6.4H14.4L15.2 9.2H8.2Z" fill="#e9f0f6"/><rect x="8.2" y="10.2" width="7" height="1" fill="#3f6f9c"/><rect x="8.6" y="13.7" width="2.1" height="1.2" fill="#3db25a"/><rect x="10.7" y="13.7" width="2.1" height="1.2" fill="#e9d24a"/><rect x="12.8" y="13.7" width="2.1" height="1.2" fill="#e0577f"/></g></svg>
<svg class="a" style="left:285.7px;top:47px" width="18" height="18" viewBox="0 0 18 18"><g filter="url(#ib)"><path d="M5.6 0.8H12.6L13.6 4.4H4.6Z" fill="#f2f6fa" stroke="#9fb2c8" stroke-width="0.4"/><path d="M1.9 6.6Q1.9 3.8 4.6 3.8H13.5Q16.2 3.8 16.2 6.6V11.4Q16.2 13.8 13.8 13.8H4.3Q1.9 13.8 1.9 11.4Z" fill="url(#bk)"/><rect x="4.2" y="5.6" width="9.8" height="3.4" fill="#12345a"/><rect x="4.4" y="6.4" width="9.4" height="0.7" fill="#3a6d99"/><rect x="4.6" y="11.3" width="3" height="1.4" fill="#3db25a"/><rect x="7.6" y="11.3" width="3" height="1.4" fill="#e9d24a"/><rect x="10.6" y="11.3" width="3" height="1.4" fill="#e0577f"/><circle cx="3.2" cy="10" r="0.5" fill="#5fd06a"/></g></svg>
<svg class="a" style="left:309px;top:47px" width="18" height="18" viewBox="0 0 18 18"><g filter="url(#ib)"><path d="M6.9 4.8Q6.9 1.4 10.3 1.4Q13.700000000000001 1.4 13.700000000000001 4.8L11.83 9.05H8.770000000000001Z" fill="url(#st)"/><ellipse cx="9.450000000000001" cy="3.78" rx="1.19" ry="2.04" fill="#eaf3fa" opacity=".85"/><path d="M1.8 8.2L8.4 7L15.2 9.4V12L9 13.6L1.8 10.8Z" fill="url(#st)"/><path d="M1.8 8.2L8.4 7L15.2 9.4L9 10.8Z" fill="#3f86b8"/><path d="M3 11.4L9 13.8L14.6 12.3V13.3L9 14.8L3 12.4Z" fill="#c8463c"/></g></svg>
<svg class="a" style="left:331px;top:47px" width="18" height="18" viewBox="0 0 18 18"><g filter="url(#ib)"><path d="M5.6 8.4L3.6 13" stroke="#1b4872" stroke-width="1.7" stroke-linecap="round"/><circle cx="7.6" cy="5.6" r="3.6" fill="#8fcdf1" stroke="#f0f6fb" stroke-width="1"/><circle cx="7.6" cy="5.6" r="4.2" fill="none" stroke="#3f79a8" stroke-width="0.5"/><path d="M5.8 5.8L7.2 7L9.4 4.2" stroke="#2d86c8" stroke-width="0.9" fill="none"/><rect x="8.2" y="8.8" width="8.2" height="7.6" rx="1.2" fill="#12345a"/><circle cx="12.3" cy="12.6" r="2.2" fill="#eef3f8"/><circle cx="12.3" cy="12.6" r="1" fill="#12345a"/></g></svg>
<svg class="a" style="left:359.5px;top:47px" width="18" height="18" viewBox="0 0 18 18"><g filter="url(#ib)"><path d="M5.6 2.6H14.8V12.2H5.6Z" fill="url(#bk)"/><rect x="7.4" y="4.4" width="5.6" height="4" fill="#254f7b"/><path d="M2.6 2.4H6V14.2Q6 15.9 4.3 15.9Q2.6 15.9 2.6 14.2Z" fill="#f2f7fb" stroke="#3f79a8" stroke-width="0.6"/><path d="M3.2 10.4H5.4V14.2Q5.4 15.3 4.3 15.3Q3.2 15.3 3.2 14.2Z" fill="#3a8fd0"/><path d="M2.6 16.4H7" stroke="#5f7c9c" stroke-width="0.6"/></g></svg>
<svg class="a" style="left:392.6px;top:47px" width="18" height="18" viewBox="0 0 18 18"><g filter="url(#ib)"><rect x="5.3" y="2" width="10.1" height="11.8" rx="0.8" fill="url(#bk)"/><rect x="7.6" y="7.6" width="5.6" height="4.2" rx="0.5" fill="#eef3f8"/><path d="M8.6 7.6V6.2Q8.6 4.4 10.4 4.4Q12.2 4.4 12.2 6.2V7.6" fill="none" stroke="#eef3f8" stroke-width="0.9"/><path d="M8.2 9.7H12.6" stroke="#8ea3bb" stroke-width="0.6"/><path d="M2 2H5.4V13.8Q5.4 15.5 3.7 15.5Q2 15.5 2 13.8Z" fill="#f2f7fb" stroke="#3f79a8" stroke-width="0.6"/><path d="M2.6 10H4.8V13.8Q4.8 14.9 3.7 14.9Q2.6 14.9 2.6 13.8Z" fill="#3a8fd0"/></g></svg>
<svg class="a" style="left:426px;top:47px" width="18" height="18" viewBox="0 0 18 18"><g filter="url(#ib)"><rect x="1.6" y="1.5" width="10.8" height="13.5" rx="1" fill="url(#bk)"/><path d="M4 6.4L6 4.4L7.4 5.8" stroke="#6c9cc4" stroke-width="0.6" fill="none"/><circle cx="10.6" cy="3.4" r="0.9" fill="#dfe8f1"/><path d="M8.4 7.4H13.2V5.6L17.3 8.7L13.2 11.8V10H8.4Z" fill="#4bb848" stroke="#e7f4e4" stroke-width="0.5"/></g></svg>
<svg class="a" style="left:454px;top:47px" width="18" height="18" viewBox="0 0 18 18"><g filter="url(#ib)"><path d="M3.4 4.4Q3.4 2 6 2H12.4Q15 2 15 4.4V5.4H3.4Z" fill="#5fae52"/><path d="M5 3.2H13.4" stroke="#c6e5b8" stroke-width="0.7"/><rect x="2.2" y="5" width="14" height="4.6" rx="0.8" fill="#e4ecf3" stroke="#5b7c9f" stroke-width="0.5"/><rect x="5" y="6.2" width="3.6" height="2" fill="#54789c"/><rect x="9.8" y="6.2" width="3.6" height="2" fill="#54789c"/><rect x="2.8" y="9.6" width="12.8" height="5.4" rx="0.6" fill="url(#bk)"/><rect x="6" y="11.2" width="6.4" height="1.2" fill="#5b83aa"/></g></svg>
<svg class="a" style="left:476.3px;top:47px" width="18" height="18" viewBox="0 0 18 18"><g filter="url(#ib)"><rect x="1.2" y="1.5" width="14.1" height="11.8" rx="1" fill="#f2f6fa" stroke="#12345a" stroke-width="0.8"/><path d="M1.2 2.4Q1.2 1.5 2.2 1.5H14.3Q15.3 1.5 15.3 2.4V4.4H1.2Z" fill="#12345a"/><rect x="3.2" y="5.6" width="2.6" height="2.6" fill="#2d7fd0"/><rect x="7" y="5.6" width="2.6" height="2.6" fill="#2d7fd0"/><rect x="10.8" y="5.6" width="2.6" height="2.6" fill="#37a857"/><rect x="3.2" y="9.2" width="2.6" height="2.6" fill="#ef7a2f"/><rect x="7" y="9.2" width="2.6" height="2.6" fill="#2354b0"/><rect x="10.8" y="9.2" width="2.6" height="2.6" fill="#ef8b2f"/></g></svg>
<div class="a" style="left:294px;top:76.2px;width:1.2px;height:1.2px;background:#223450;border-radius:50%"></div>
<div class="a" style="left:484.4px;top:76.2px;width:1.2px;height:1.2px;background:#223450;border-radius:50%"></div>
</body></html>
